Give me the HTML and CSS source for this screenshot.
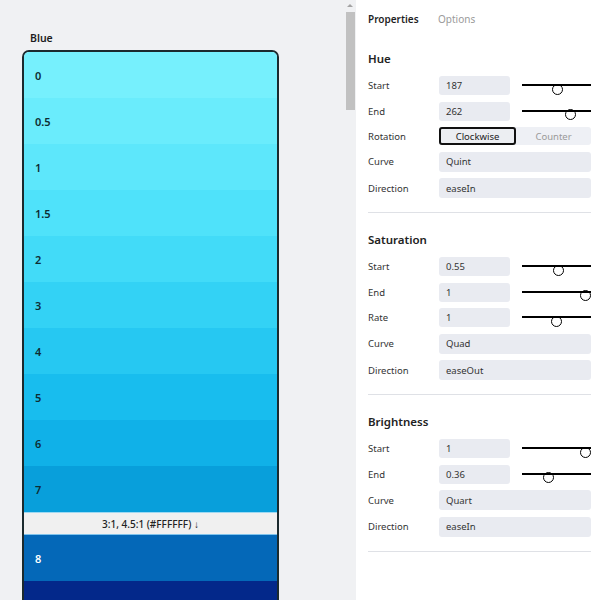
FILE: index.html
```html
<!DOCTYPE html>
<html>
<head>
<meta charset="utf-8">
<link rel="stylesheet" href="styles.css">
</head>
<body>
<div class="app">
  <div class="left">
    <div class="left-content">
      <div class="ramp-title">Blue</div>
      <div class="ramp">
        <div class="swatch s0"><span>0</span></div>
        <div class="swatch s05"><span>0.5</span></div>
        <div class="swatch s1"><span>1</span></div>
        <div class="swatch s15"><span>1.5</span></div>
        <div class="swatch s2"><span>2</span></div>
        <div class="swatch s3"><span>3</span></div>
        <div class="swatch s4"><span>4</span></div>
        <div class="swatch s5"><span>5</span></div>
        <div class="swatch s6"><span>6</span></div>
        <div class="swatch s7"><span>7</span></div>
        <div class="contrast">3:1, 4.5:1 (#FFFFFF) ↓</div>
        <div class="swatch s8 light"><span>8</span></div>
        <div class="swatch s9 light"></div>
      </div>
    </div>
    <div class="scrollbar">
      <div class="arrow"></div>
      <div class="thumb"></div>
    </div>
  </div>

  <div class="panel">
    <div class="tabs">
      <div class="tab active">Properties</div>
      <div class="tab">Options</div>
    </div>

    <div class="section">
      <div class="section-title">Hue</div>
      <div class="rows">
        <div class="row num">
          <div class="label">Start</div>
          <div class="field">187</div>
          <div class="slider"><div class="knob" style="left:30px"></div><div class="track"></div></div>
        </div>
        <div class="row num">
          <div class="label">End</div>
          <div class="field">262</div>
          <div class="slider"><div class="knob" style="left:42.5px"></div><div class="track"></div></div>
        </div>
        <div class="row seg">
          <div class="label">Rotation</div>
          <div class="segmented">
            <div class="seg-btn active">Clockwise</div>
            <div class="seg-btn">Counter</div>
          </div>
        </div>
        <div class="row sel">
          <div class="label">Curve</div>
          <div class="field wide">Quint</div>
        </div>
        <div class="row sel">
          <div class="label">Direction</div>
          <div class="field wide">easeIn</div>
        </div>
      </div>
    </div>

    <div class="section">
      <div class="section-title">Saturation</div>
      <div class="rows">
        <div class="row num">
          <div class="label">Start</div>
          <div class="field">0.55</div>
          <div class="slider"><div class="knob" style="left:31px"></div><div class="track"></div></div>
        </div>
        <div class="row num">
          <div class="label">End</div>
          <div class="field">1</div>
          <div class="slider"><div class="knob" style="left:58px"></div><div class="track"></div></div>
        </div>
        <div class="row num">
          <div class="label">Rate</div>
          <div class="field">1</div>
          <div class="slider"><div class="knob" style="left:28.5px"></div><div class="track"></div></div>
        </div>
        <div class="row sel">
          <div class="label">Curve</div>
          <div class="field wide">Quad</div>
        </div>
        <div class="row sel">
          <div class="label">Direction</div>
          <div class="field wide">easeOut</div>
        </div>
      </div>
    </div>

    <div class="section">
      <div class="section-title">Brightness</div>
      <div class="rows">
        <div class="row num">
          <div class="label">Start</div>
          <div class="field">1</div>
          <div class="slider"><div class="knob" style="left:58px"></div><div class="track"></div></div>
        </div>
        <div class="row num">
          <div class="label">End</div>
          <div class="field">0.36</div>
          <div class="slider"><div class="knob" style="left:20.5px"></div><div class="track"></div></div>
        </div>
        <div class="row sel">
          <div class="label">Curve</div>
          <div class="field wide">Quart</div>
        </div>
        <div class="row sel">
          <div class="label">Direction</div>
          <div class="field wide">easeIn</div>
        </div>
      </div>
    </div>
  </div>
</div>
</body>
</html>
```

FILE: styles.css
```css
* { box-sizing: border-box; }
html, body {
  margin: 0;
  padding: 0;
  width: 600px;
  height: 600px;
  overflow: hidden;
  font-family: "Noto Sans", "Open Sans", sans-serif;
}
.app {
  display: flex;
  width: 600px;
  height: 600px;
  overflow: hidden;
}
.left {
  width: 356px;
  height: 600px;
  background: #f0f1f3;
  display: flex;
  flex-shrink: 0;
}
.left-content {
  width: 340px;
  padding: 30px 0 0 22px;
}
.ramp-title {
  font-size: 10.5px;
  font-weight: 600;
  color: #1d1d1d;
  line-height: 16px;
  padding-left: 8px;
  margin-bottom: 4px;
}
.ramp {
  width: 257px;
  border: 2px solid #1b2a2e;
  border-bottom: none;
  border-radius: 7px 7px 0 0;
  overflow: hidden;
}
.swatch {
  height: 46px;
  display: flex;
  align-items: center;
  padding-left: 11px;
  font-size: 11px;
  font-weight: 600;
  color: #0e2c33;
}
.swatch.light { color: #ffffff; }
.s0 { background: #76f0fd; }
.s05 { background: #6aecfc; }
.s1 { background: #5de7fb; }
.s15 { background: #4fe2fa; }
.s2 { background: #42dbf8; }
.s3 { background: #33d2f5; }
.s4 { background: #26c8f2; }
.s5 { background: #18bdee; }
.s6 { background: #10b1e8; }
.s7 { background: #089fdb; }
.s8 { background: #0468b8; }
.s9 { background: #03288a; height: 60px; }
.contrast {
  height: 23px;
  background: #f0f0f0;
  border-top: 1px solid #9fd9f2;
  border-bottom: 1px solid #7fc3ec;
  display: flex;
  align-items: center;
  justify-content: center;
  font-size: 10px;
  font-weight: 500;
  color: #222;
}
.scrollbar {
  width: 16px;
  padding-top: 4px;
  display: flex;
  flex-direction: column;
  align-items: center;
}
.arrow {
  width: 0;
  height: 0;
  border-left: 3px solid transparent;
  border-right: 3px solid transparent;
  border-bottom: 3px solid #a3a3a3;
  margin-left: 4px;
}
.thumb {
  width: 9px;
  height: 98px;
  margin-top: 5px;
  margin-left: 5px;
  background: #c1c1c1;
}
.panel {
  flex: 1;
  background: #ffffff;
  padding: 0 9px 0 12px;
}
.tabs {
  height: 32px;
  display: flex;
  padding-top: 10px;
  font-size: 10px;
  line-height: 18px;
}
.tab {
  width: 70px;
  color: #9a9a9a;
}
.tab.active {
  color: #1f1f1f;
  font-weight: 600;
}
.section {
  padding: 19px 0 14px;
  border-bottom: 1px solid #dfe1e6;
}
.section-title {
  font-size: 11.5px;
  font-weight: 600;
  color: #222;
  line-height: 16px;
  margin-bottom: 9px;
}
.rows {
  display: flex;
  flex-direction: column;
  gap: 6.5px;
}
.row {
  display: grid;
  grid-template-columns: 59px 71px 69px;
  column-gap: 12px;
}
.row.num { height: 19px; }
.row.seg { height: 18px; }
.row.sel { height: 20px; }
.label {
  font-size: 9.5px;
  color: #333;
  align-self: center;
  white-space: nowrap;
}
.field {
  background: #e9ebf1;
  border-radius: 3px;
  font-size: 9.5px;
  color: #333;
  padding-left: 7px;
  display: flex;
  align-items: center;
}
.field.wide { grid-column: 2 / span 2; }
.slider {
  position: relative;
}
.track {
  position: absolute;
  left: 0;
  right: 0;
  top: 8px;
  height: 2px;
  background: #000;
}
.knob {
  position: absolute;
  top: 7.5px;
  width: 11px;
  height: 11px;
  border: 1.5px solid #000;
  border-radius: 50%;
  background: #fff;
}
.segmented {
  grid-column: 2 / span 2;
  display: flex;
  background: #eef0f5;
  border-radius: 3px;
}
.seg-btn {
  flex: 1;
  display: flex;
  align-items: center;
  justify-content: center;
  font-size: 9.5px;
  color: #9a9a9a;
}
.seg-btn.active {
  flex: 0 0 77px;
  border: 2px solid #111;
  border-radius: 3px;
  background: #eceef2;
  color: #222;
}
```
